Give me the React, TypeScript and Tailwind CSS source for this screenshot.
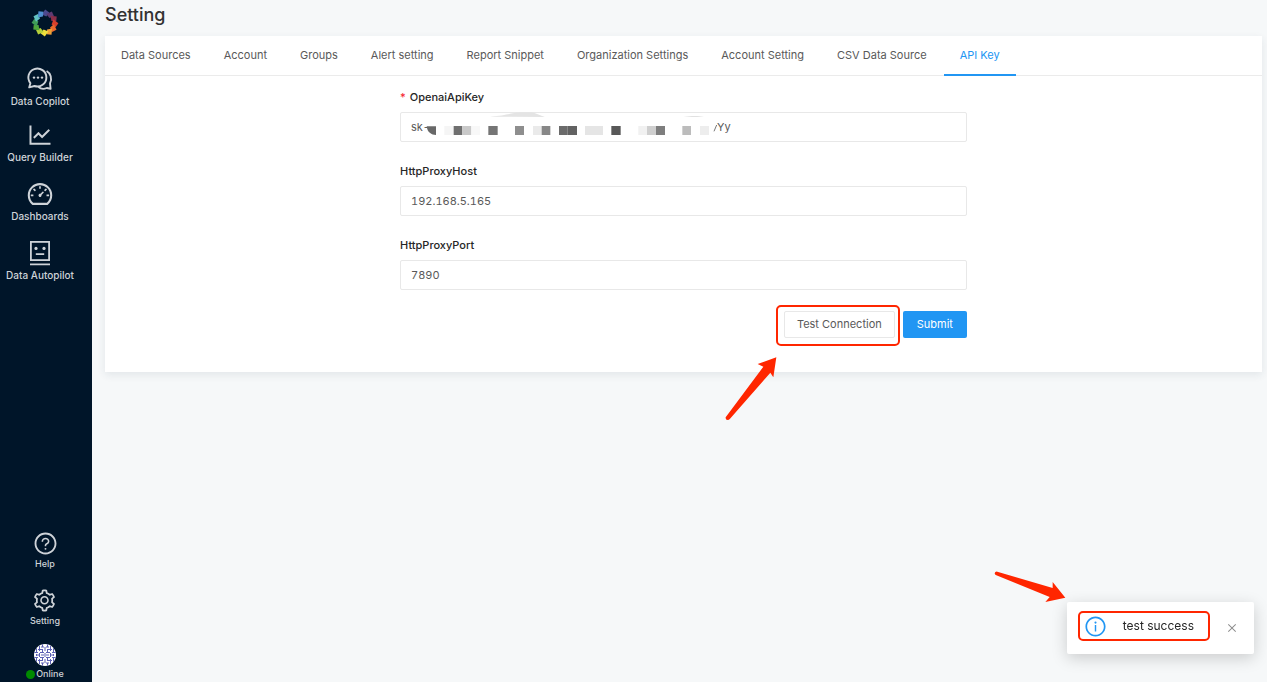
import React, { useState } from 'react'
import {
  AiOutlineClose,
  AiOutlineDashboard,
  AiOutlineInfoCircle,
  AiOutlineLineChart,
  AiOutlineQuestionCircle,
  AiOutlineSetting,
} from 'react-icons/ai'

// clockwise from twelve o'clock
const logoColors = [
  '#4c4a8f',
  '#5f3a72',
  '#8a2f4a',
  '#d8402c',
  '#ea6a2e',
  '#f0a035',
  '#efe03e',
  '#b5cf3a',
  '#4fa63c',
  '#3f9b58',
  '#62c3c4',
  '#4f8fd0',
]

const Logo: React.FC = () => (
  <svg width="28" height="28" viewBox="-14 -14 28 28" aria-hidden="true">
    {logoColors.map((color, i) => (
      <path
        key={color}
        d="M-3.4 -8.4 L0.2 -13.4 L4.2 -10.6 L1.4 -6.6 Z"
        fill={color}
        transform={`rotate(${i * 30})`}
      />
    ))}
  </svg>
)

const CopilotIcon: React.FC = () => (
  <svg width="28" height="28" viewBox="0 0 28 28" fill="none" stroke="currentColor" strokeWidth="1.9" strokeLinejoin="round" aria-hidden="true">
    <path d="M3.2 22.4 L4.4 18.2 A9 9 0 1 1 8.4 21 Z" />
    <path d="M20.6 6 C24.6 8.2 26.4 13.6 24 18.4 L24.6 23.8 L20.8 23 C17.6 24.4 14.6 24 12.4 21.8" />
    <g fill="currentColor" stroke="none">
      <circle cx="8" cy="12.6" r="1.2" />
      <circle cx="12" cy="12.6" r="1.2" />
      <circle cx="16" cy="12.6" r="1.2" />
    </g>
  </svg>
)

const AutopilotIcon: React.FC = () => (
  <svg width="28" height="28" viewBox="0 0 28 28" fill="none" stroke="currentColor" strokeWidth="1.8" aria-hidden="true">
    <rect x="4.9" y="2.9" width="18.2" height="18.2" />
    <path d="M9.8 15.2 H18.2 M4 25.4 H24" />
    <g fill="currentColor" stroke="none">
      <circle cx="10" cy="9.4" r="1.6" />
      <circle cx="18" cy="9.4" r="1.6" />
    </g>
  </svg>
)

const Avatar: React.FC = () => (
  <svg width="22" height="22" viewBox="0 0 22 22" aria-hidden="true">
    <clipPath id="avatar-clip">
      <circle cx="11" cy="11" r="11" />
    </clipPath>
    <g clipPath="url(#avatar-clip)">
      <rect width="22" height="22" fill="#fff" />
      <g fill="none" stroke="#5c61b4" strokeWidth="1">
        <path d="M2.5 4v4M2.5 10v2M2.5 14v4M5.5 2v5M5.5 9v4M5.5 15v5M8.5 0v3M8.5 5v3M8.5 14v3M8.5 19v3M11 3v4M11 9v4M11 15v4M13.5 0v3M13.5 5v3M13.5 14v3M13.5 19v3M16.5 2v5M16.5 9v4M16.5 15v5M19.5 4v4M19.5 10v2M19.5 14v4" />
        <path d="M4 5.5h4M14 5.5h4M0 8.5h4M6 8.5h4M12 8.5h4M18 8.5h4M2 11h3M7 11h3M12 11h3M17 11h3M0 13.5h4M6 13.5h4M12 13.5h4M18 13.5h4M4 16.5h4M14 16.5h4M7 3h3M12 3h3M7 19h3M12 19h3" />
      </g>
    </g>
  </svg>
)

const mainNav = [
  { label: 'Data Copilot', icon: <CopilotIcon />, spacing: '' },
  { label: 'Query Builder', icon: <AiOutlineLineChart size={28} />, spacing: 'mt-3' },
  { label: 'Dashboards', icon: <AiOutlineDashboard size={28} />, spacing: 'mt-[15px]' },
  { label: 'Data Autopilot', icon: <AutopilotIcon />, spacing: 'mt-[15px]' },
]

const tabs = [
  'Data Sources',
  'Account',
  'Groups',
  'Alert setting',
  'Report Snippet',
  'Organization Settings',
  'Account Setting',
  'CSV Data Source',
  'API Key',
]

// x, width, fill of each tile that covers the secret
const maskTiles: [number, number, string][] = [
  [163, 28, '#f5f5f5'],
  [191, 26, '#6f6f6f'],
  [217, 27, '#c9c9c9'],
  [244, 26, '#f8f8f8'],
  [295, 28, '#757575'],
  [375, 27, '#8e8e8e'],
  [429, 26, '#eaeaea'],
  [455, 26, '#878787'],
  [507, 26, '#6b6b6b'],
  [533, 28, '#626262'],
  [585, 54, '#e5e5e5'],
  [664, 28, '#585858'],
  [745, 26, '#f1f1f1'],
  [771, 27, '#cfcfcf'],
  [798, 27, '#7e7e7e'],
  [877, 26, '#bcbcbc'],
  [930, 27, '#ededed'],
]

const KeyMask: React.FC = () => (
  <div className="pointer-events-none absolute inset-y-0 left-0 flex items-center" aria-hidden="true">
    <svg width="317" height="30" viewBox="30 81 951 90">
      <path d="M300 95 C350 93 360 83 395 82 H425 C440 86 450 92 465 96 Z" fill="#e4e4e4" />
      <path d="M880 95 C900 92 930 92 942 95 Z" fill="#d8d8d8" />
      <path d="M110 124 H138 V150 C124 150 112 142 110 124 Z" fill="#686868" />
      {maskTiles.map(([x, width, fill]) => (
        <rect key={x} x={x} y="123" width={width} height="27" fill={fill} />
      ))}
      <path d="M972 139 L980 120" stroke="#777" strokeWidth="3" />
    </svg>
    <span className="text-[11px] text-[#595959]">Yy</span>
  </div>
)

const labelClass = 'mb-[6px] flex gap-1 leading-[18px] font-medium text-[#262626]'

const inputClass =
  'h-[30px] w-full rounded-xs border border-[#e8e8e8] bg-white px-[10px] text-[11px] text-[#595959] tabular-nums outline-none focus:border-[#2196f3]'

const Sidebar: React.FC = () => (
  <aside className="flex w-[92px] shrink-0 flex-col justify-between bg-[#001529] text-[#ced3d8]">
    <div>
      <a href="#home" aria-label="Home" className="flex w-[90px] justify-center pt-[9px]">
        <Logo />
      </a>
      <nav className="mt-7 flex w-20 flex-col">
        {mainNav.map((item) => (
          <a key={item.label} href="#nav" className={`flex flex-col items-center ${item.spacing}`}>
            {item.icon}
            <span className="text-[10px] leading-4 font-medium whitespace-nowrap">{item.label}</span>
          </a>
        ))}
      </nav>
    </div>
    <div className="flex w-[90px] flex-col items-center text-[9px] leading-4 font-medium">
      <a href="#help" className="flex flex-col items-center">
        <AiOutlineQuestionCircle size={25} />
        Help
      </a>
      <a href="#setting" className="mt-4 flex flex-col items-center">
        <AiOutlineSetting size={25} />
        Setting
      </a>
      <button type="button" className="mt-[15px] flex flex-col items-center">
        <Avatar />
        <span className="flex items-center gap-px">
          <span className="size-[9px] rounded-full bg-[#008a00]" />
          Online
        </span>
      </button>
    </div>
  </aside>
)

const ApiKeyForm: React.FC = () => {
  const [apiKey, setApiKey] = useState('sk-')
  const [host, setHost] = useState('192.168.5.165')
  const [port, setPort] = useState('7890')

  return (
    <form
      className="mx-auto flex w-[49%] flex-col gap-5 pt-3 pb-[34px] text-[11px]"
      onSubmit={(e) => e.preventDefault()}
    >
      <div>
        <label htmlFor="api-key" className={labelClass}>
          <span className="text-[#f5222d]">*</span>
          OpenaiApiKey
        </label>
        <div className="relative">
          <input id="api-key" className={inputClass} value={apiKey} onChange={(e) => setApiKey(e.target.value)} />
          <KeyMask />
        </div>
      </div>
      <div>
        <label htmlFor="proxy-host" className={labelClass}>
          HttpProxyHost
        </label>
        <input id="proxy-host" className={inputClass} value={host} onChange={(e) => setHost(e.target.value)} />
      </div>
      <div>
        <label htmlFor="proxy-port" className={labelClass}>
          HttpProxyPort
        </label>
        <input id="proxy-port" className={inputClass} value={port} onChange={(e) => setPort(e.target.value)} />
      </div>
      <div className="mt-px flex justify-end gap-2">
        <div className="relative">
          <button
            type="button"
            className="h-[27px] rounded-xs border border-[#e8e8e8] bg-white px-3 text-[11px] text-[#595959]"
          >
            Test Connection
          </button>
          <div className="pointer-events-none absolute -top-[6px] -right-[5px] -bottom-2 -left-2 rounded-[5px] border-2 border-[#ff2600]" />
          <svg className="pointer-events-none absolute top-[46px] -left-[59px]" width="52" height="64" viewBox="78 201 156 192" aria-hidden="true">
            <path
              d="M232 202 L176 222 L193 230 L80 382 Q79 390 86 390 Q90 390 93 386 L214 248 L223 262 Z"
              fill="#ff2600"
            />
          </svg>
        </div>
        <button type="submit" className="h-[27px] rounded-xs bg-[#2196f3] px-[14px] text-[11px] text-white">
          Submit
        </button>
      </div>
    </form>
  )
}

const Notification: React.FC = () => (
  <div
    role="status"
    className="fixed right-[13px] bottom-7 flex items-center rounded-xs bg-white py-[9px] pr-4 pl-[11px] shadow-[0_4px_16px_rgba(0,0,0,0.18)]"
  >
    <div className="mb-1 flex h-[30px] items-center gap-4 rounded-[5px] border-2 border-[#ff2600] pr-[14px] pl-1">
      <AiOutlineInfoCircle size={23} className="text-[#2196f3]" />
      <span className="text-[12px] text-[#262626]">test success</span>
    </div>
    <button type="button" aria-label="Close" className="ml-4 text-[#8c8c8c]">
      <AiOutlineClose size={12} />
    </button>
    <svg className="pointer-events-none absolute -top-[31px] -left-[73px]" width="72" height="32" viewBox="40 33 216 96" aria-hidden="true">
      <path
        d="M254 113 L216 66 L216 84 L50 35 Q43 34 42 40 Q42 45 47 46 L207 111 L194 126 Z"
        fill="#ff2600"
      />
    </svg>
  </div>
)

const App: React.FC = () => {
  const [activeTab, setActiveTab] = useState('API Key')

  return (
    <div className="flex min-h-screen bg-[#f6f8f9] font-['Inter','Liberation_Sans',sans-serif]">
      <Sidebar />
      <main className="min-w-0 flex-1 pr-[5px] pl-[13px]">
        <h1 className="mb-[6px] text-[18px] leading-[30px] font-medium text-[#323232]">Setting</h1>
        <section className="bg-white shadow-[0_3px_8px_rgba(30,60,80,0.09)]">
          <div role="tablist" className="flex h-10 gap-px border-b border-[#ebebeb]">
            {tabs.map((tab) => (
              <button
                key={tab}
                type="button"
                role="tab"
                aria-selected={tab === activeTab}
                onClick={() => setActiveTab(tab)}
                className={`-mb-px border-b-2 px-4 text-[11px] whitespace-nowrap ${
                  tab === activeTab ? 'border-[#2196f3] text-[#2196f3]' : 'border-transparent text-[#595959]'
                }`}
              >
                {tab}
              </button>
            ))}
          </div>
          <ApiKeyForm />
        </section>
      </main>
      <Notification />
    </div>
  )
}

export default App
